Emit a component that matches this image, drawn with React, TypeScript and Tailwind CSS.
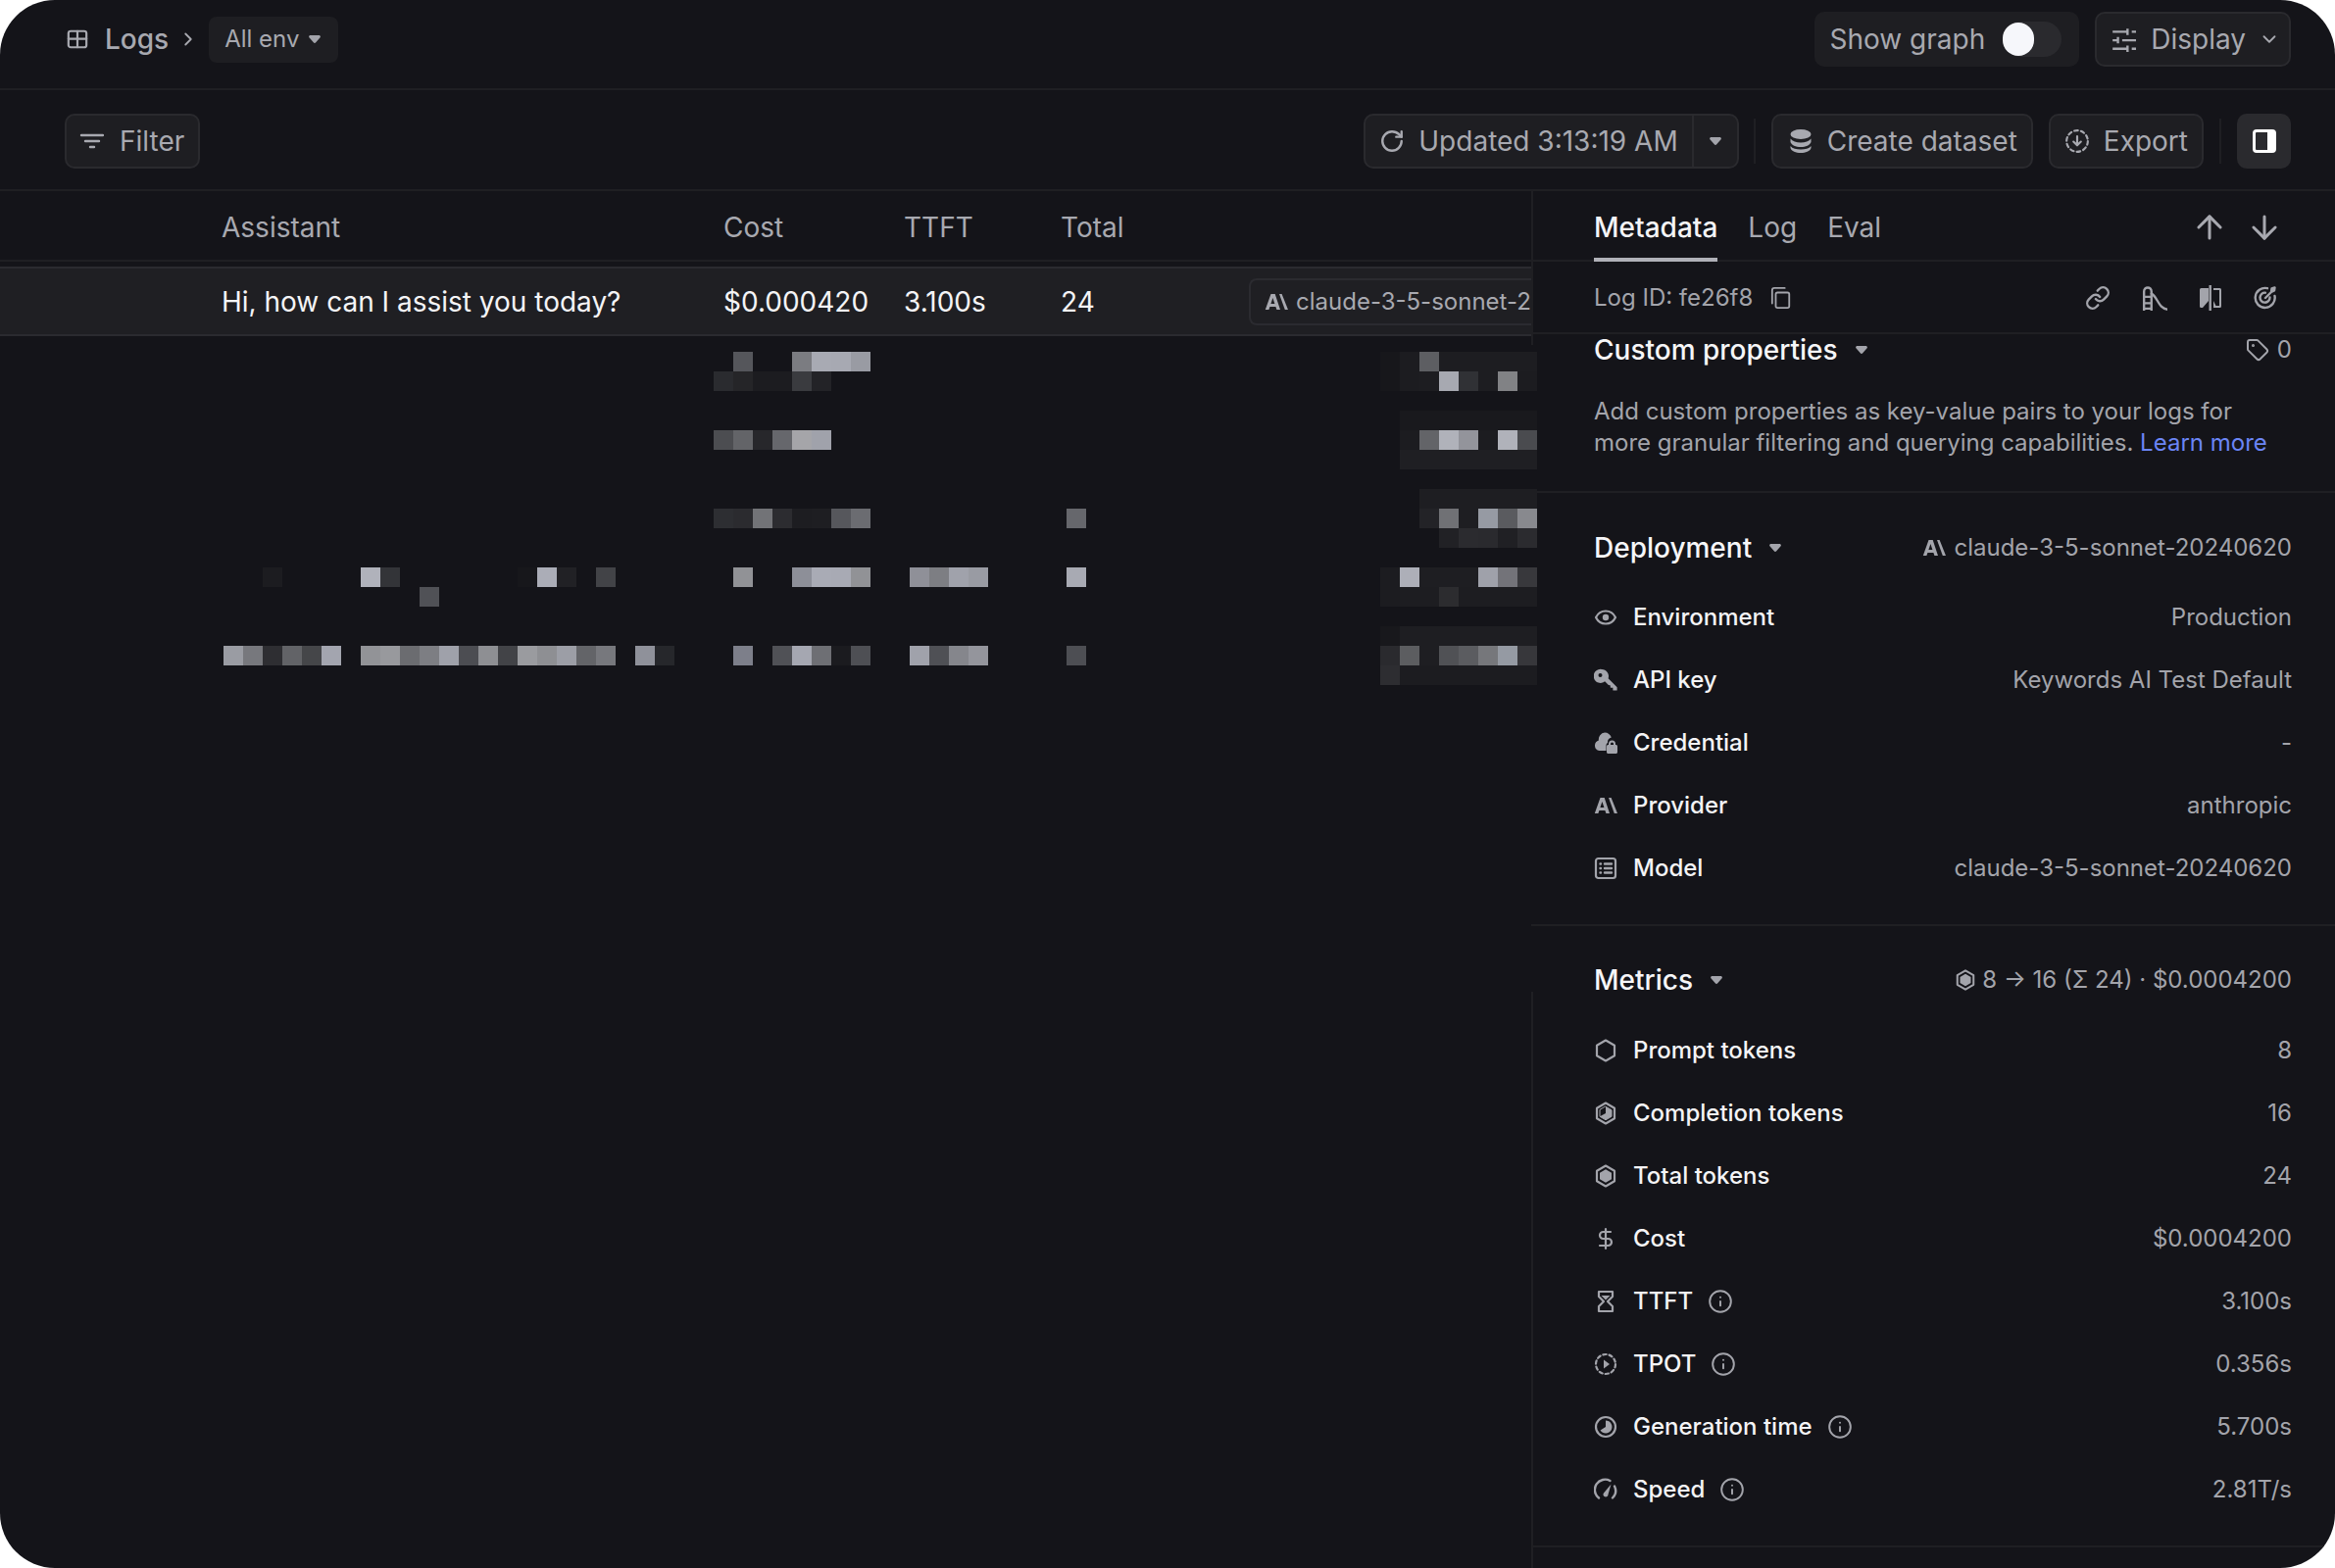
import * as React from "react"
import { ArrowDown, ArrowUp, ChevronDown, ChevronRight, DollarSign, Info, Link, RotateCw, Tag } from "lucide-react"

const Svg = ({ children, w = 24, h = 24, vb = "0 0 24 24", sw = 2.2 }: { children: React.ReactNode; w?: number; h?: number; vb?: string; sw?: number }) => (
    <svg width={w} height={h} viewBox={vb} fill="none" stroke="currentColor" strokeWidth={sw} strokeLinecap="round" strokeLinejoin="round" className="shrink-0">
        {children}
    </svg>
)

const Caret = () => (
    <svg width="12" height="8" viewBox="0 0 12 8" className="shrink-0 text-[#a3a4ab]" fill="currentColor">
        <path d="M1.6 0h8.8c1.2 0 1.9 1.3 1.2 2.3L7.2 7.3c-.6.8-1.8.8-2.4 0L.4 2.3C-.3 1.3.4 0 1.6 0z" />
    </svg>
)

const AnthropicLogo = ({ w = 24 }: { w?: number }) => (
    <svg width={w} height="18" viewBox="0 0 24 18" className="shrink-0" fill="currentColor" fillRule="evenodd">
        <path d="M6.5 1h4.2L16 17h-3.600l-1-3H5.400l-1 3H.8zM6.400 11h4L8.400 5z" />
        <path d="M15 1h2.600L24 17h-3.200z" />
    </svg>
)

const TableIcon = () => (
    <Svg w={24} h={22} sw={2.4}>
        <rect x="2" y="3" width="20" height="18" rx="2.5" />
        <path d="M2 11.5h20M12 3v18" />
    </Svg>
)

const FilterIcon = () => (
    <Svg w={26} h={24} sw={2.4}>
        <path d="M2 6h22M6 12h14M11 18h4" />
    </Svg>
)

const SlidersIcon = () => (
    <Svg w={26} h={26} sw={2.2}>
        <path d="M2 5h13M20 5h4M2 13h4M11 13h13M2 21h13M20 21h4M16 2v6M7 10v6M16 18v6" strokeLinecap="butt" />
    </Svg>
)

const DatabaseIcon = () => (
    <svg width="24" height="26" viewBox="0 0 24 26" className="shrink-0" fill="currentColor">
        <ellipse cx="12" cy="6" rx="10.5" ry="5" />
        <path d="M1.5 10.5c2 2.7 6 4 10.5 4s8.500-1.300 10.500-4v3.500c-1 3-5.500 5-10.500 5S2.500 17 1.500 14z" />
        <path d="M1.500 18c2 2.700 6 3.500 10.500 3.500s8.500-.8 10.500-3.500v2c-1 3.200-5.500 5-10.500 5s-9.500-1.800-10.500-5z" />
    </svg>
)

const ExportIcon = () => (
    <Svg w={26} h={26} sw={2}>
        <circle cx="12" cy="12" r="10" strokeDasharray="3.4 2.9" />
        <path d="M12 7.500v8M8.500 12.500 12 16l3.500-3.500" />
    </Svg>
)

const PanelIcon = () => (
    <svg width="24" height="24" viewBox="0 0 24 24" className="shrink-0">
        <rect x="1.500" y="1.500" width="21" height="21" rx="2.500" fill="none" stroke="#fff" strokeWidth="3" />
        <rect x="15" y="2" width="7" height="20" fill="#fff" />
    </svg>
)

const CopyIcon = () => (
    <Svg w={22} h={24} sw={2}>
        <rect x="6" y="6" width="15" height="17" rx="2" />
        <path d="M2 18V3.500C2 2.100 3 1 4.500 1H16" />
    </Svg>
)

const SlideIcon = () => (
    <Svg w={26} h={26} sw={2.2}>
        <path d="M2 24V6c0-5 7-5 7 0v18M2 11h7M2 17h7M2 22h7" strokeLinecap="butt" />
        <path d="M9 8c6 3 6 14 16 15" />
    </Svg>
)

const SplitIcon = () => (
    <svg width="24" height="26" viewBox="0 0 24 26" className="shrink-0" fill="currentColor">
        <path d="M10 3H2.500A1.500 1.500 0 0 0 1 4.500v17A1.500 1.500 0 0 0 2.500 23H4l6-7z" />
        <rect x="10.500" y="0" width="2.400" height="26" />
        <path d="M15 3h6.500A1.500 1.500 0 0 1 23 4.500v17a1.500 1.500 0 0 1-1.500 1.500H15v-2h6V5h-6z" />
        <path d="M15 23v-7l3.500 7z" />
    </svg>
)

const TargetIcon = () => (
    <Svg w={24} h={24} sw={2.4}>
        <path d="M21.500 10a10 10 0 1 1-7.500-7.800" />
        <path d="M16.500 11.500a5 5 0 1 1-4.500-4.800" />
        <path d="M12 12l6-6M18 6l.5-3.500 3-1-.5 3-3 1.500z" fill="currentColor" />
    </Svg>
)

const EyeIcon = () => (
    <Svg w={24} h={24}>
        <path d="M2 12c2-4 5.500-6.500 10-6.500S20 8 22 12c-2 4-5.500 6.500-10 6.500S4 16 2 12z" />
        <circle cx="12" cy="12" r="3.200" fill="currentColor" stroke="none" />
    </Svg>
)

const KeyIcon = () => (
    <svg width="24" height="24" viewBox="0 0 24 24" className="shrink-0" fill="currentColor" fillRule="evenodd">
        <path d="M8 1a7 7 0 0 1 6.600 9.300l9 9v3.200h-4.200v-2.700h-2.500l-.3-2.500-1.700-.3-3.800-3.700A7 7 0 1 1 8 1zM6.500 5a2 2 0 1 0 0 4 2 2 0 0 0 0-4z" />
    </svg>
)

const CloudLockIcon = () => (
    <svg width="24" height="24" viewBox="0 0 24 24" className="shrink-0" fill="currentColor">
        <path d="M11 1.500c3.200 0 5.900 2.100 6.800 5a5 5 0 0 0-3.800 4.900v.6a2.800 2.800 0 0 0-1.500 2.500V20H5.500A5 5 0 0 1 1 14.600c0-2.500 1.700-4.500 3.900-5.100A7 7 0 0 1 11 1.500z" />
        <path fillRule="evenodd" d="M18.500 9.500a3.500 3.500 0 0 1 3.500 3.500v1h.5c.8 0 1.500.7 1.500 1.500v6c0 .8-.7 1.500-1.500 1.500h-8c-.8 0-1.500-.7-1.500-1.500v-6c0-.8.700-1.500 1.500-1.500h.5v-1a3.500 3.500 0 0 1 3.500-3.500zm0 2a1.500 1.500 0 0 0-1.500 1.500v1h3v-1a1.500 1.500 0 0 0-1.500-1.500z" />
    </svg>
)

const ListIcon = () => (
    <Svg w={24} h={24}>
        <rect x="2" y="2" width="20" height="20" rx="2.500" />
        <path d="M11 7.500h7M11 12h7M11 16.500h7M6.500 7.500h.5M6.500 12h.5M6.500 16.500h.5" strokeWidth="2.400" />
    </Svg>
)

const hex = "M12 1.500 21 6.700v10.600L12 22.500 3 17.300V6.700z"
const hexInner = "M12 5.200 18 8.700v6.600L12 18.800 6 15.300V8.700z"

const HexIcon = () => (
    <Svg>
        <path d={hex} />
    </Svg>
)

const HexHalfIcon = () => (
    <Svg>
        <path d={hex} />
        <path d={hexInner} strokeWidth="1" />
        <path d="M12 5.200 18 8.700v6.600L12 18.800 6 15.300 12 12z" fill="currentColor" stroke="none" />
    </Svg>
)

const HexFullIcon = ({ w = 24 }: { w?: number }) => (
    <Svg w={w} h={w}>
        <path d={hex} />
        <path d={hexInner} fill="currentColor" stroke="none" />
    </Svg>
)

const HourglassIcon = () => (
    <Svg>
        <path d="M5 2h14v5l-5 5 5 5v5H5v-5l5-5-5-5z" />
        <path d="M7.500 6h9L12 10.500z" fill="currentColor" stroke="none" />
    </Svg>
)

const DashPlayIcon = () => (
    <Svg>
        <circle cx="12" cy="12" r="10" strokeDasharray="3.400 2.900" />
        <path d="M10 7.500v9l6-4.500z" fill="currentColor" stroke="none" />
    </Svg>
)

const PieIcon = () => (
    <Svg>
        <circle cx="12" cy="12" r="10" />
        <path d="M12 5.500a6.500 6.500 0 1 1-5.500 10l5.500-3.500z" fill="currentColor" stroke="none" />
    </Svg>
)

const GaugeIcon = () => (
    <Svg sw={2.4}>
        <path d="M5 20.500A10.500 10.500 0 0 1 16.500 3M21 8.500a10.500 10.500 0 0 1-2 12" />
        <path d="M10 15.500 17.500 6.500 14.500 17a2.500 2.500 0 1 1-4.500-1.500z" fill="currentColor" stroke="none" />
    </Svg>
)

const Btn = ({ className = "", children }: { className?: string; children: React.ReactNode }) => (
    <div className={`flex h-[56px] items-center rounded-[10px] border-2 border-[#2a2a2e] bg-[#1e1e22] text-[28px] text-[#a8a9b0] ${className}`}>
        {children}
    </div>
)

const Row = ({ icon, label, value, info }: { icon: React.ReactNode; label: string; value: string; info?: boolean }) => (
    <div className="flex h-[64px] items-center justify-between text-[24px]">
        <div className="flex items-center">
            <span className="mr-4 flex w-6 justify-center text-[#a3a4ab]">{icon}</span>
            <span className="font-medium text-[#f4f4f6]">{label}</span>
            {info && <Info size={26} strokeWidth={1.8} className="ml-[15px] text-[#a3a4ab]" />}
        </div>
        <span className="text-[#a3a4ab]">{value}</span>
    </div>
)

const SectionTitle = ({ title }: { title: string }) => (
    <div className="flex items-center gap-[18px] text-[28px] font-medium text-[#f6f6f8]">
        <span>{title}</span>
        <Caret />
    </div>
)

// redacted cells: x, y, then one colour per 20px cell
const mosaic: [number, number, string[]][] = [
    [728, 19, ["", "#55565b", "", "", "#7b7c81", "#a8aab3", "#a7a9b2", "#999ba3"]],
    [728, 39, ["#2a2b2f", "#252528", "#1c1c20", "#1c1c20", "#3a3b3f", "#232327"]],
    [728, 99, ["#4c4d51", "#636468", "#27272b", "#66676c", "#a5a5a9", "#a0a2ab"]],
    [728, 179, ["#2d2e32", "#2b2b2f", "#727377", "#2c2c30", "#1d1d21", "#1e1e22", "#56575c", "#6b6c71"]],
    [728, 239, ["", "#919296", "", "", "#8d8f98", "#a9abb5", "#a8aab4", "#919296"]],
    [728, 319, ["", "#7d7f8a", "", "#505156", "#a5a7b1", "#6e6f74", "#1b1b1f", "#4e4f54"]],
    [928, 239, ["#8f9098", "#7d7e83", "#a0a2ab", "#999ba3"]],
    [928, 319, ["#a0a2ab", "#4f5055", "#85868c", "#94959c"]],
    [1088, 179, ["#66676c"]],
    [1088, 239, ["#a8aab3"]],
    [1088, 319, ["#4d4e53"]],
    [228, 239, ["", "", "#1c1c20", "", "", "", "", "#b0b2bb", "#333438", "", "", "", "", "", "", "#17171b", "#abadb7", "#212125", "", "#424347"]],
    [428, 259, ["#505156"]],
    [228, 319, ["#9a9ca3", "#77787d", "#2e2e32", "#626367", "#454649", "#a3a5af", "", "#929397", "#98999d", "#6b6c70", "#7d7e83", "#9fa1aa", "#4c4d52", "#8e8f93", "#424347", "#9a9b9f", "#8e8f93", "#9c9ea6", "#636468", "#77787d", "", "#8f919a", "#26272b"]],
    [1408, 19, ["#17171b", "#1c1c20", "#5d5e62", "#1d1d21", "#1d1d21", "#1d1d21", "#1d1d21", "#1d1d21"]],
    [1408, 39, ["#17171b", "#1c1c20", "#1d1d21", "#a7a9b1", "#303135", "#1d1d21", "#818285", "#1c1c20"]],
    [1428, 79, ["#19191d", "#19191d", "#19191d", "#19191d", "#19191d", "#19191d", "#19191d"]],
    [1428, 99, ["#1c1c20", "#636468", "#b0b2ba", "#93949b", "#1c1c20", "#b0b2ba", "#4a4b4f"]],
    [1428, 119, ["#1f1f23", "#1f1f23", "#1f1f23", "#1f1f23", "#1f1f23", "#1f1f23", "#1f1f23"]],
    [1448, 159, ["#1e1e22", "#1e1e22", "#1e1e22", "#1e1e22", "#1e1e22", "#1e1e22"]],
    [1448, 179, ["#232327", "#707175", "#1e1e22", "#969aa3", "#5a5b5f", "#88898e"]],
    [1468, 199, ["#212125", "#2b2b2f", "#2a2a2e", "#202024", "#2b2b2f"]],
    [1408, 239, ["#1c1c20", "#adafb8", "#1e1e22", "#1e1e22", "#1e1e22", "#9fa1aa", "#737379", "#38383c"]],
    [1408, 259, ["#1c1c20", "#1d1d21", "#1d1d21", "#2c2c2f", "#1d1d21", "#1d1d21", "#1d1d21", "#1d1d21"]],
    [1408, 299, ["#18181c", "#1e1e22", "#1e1e22", "#1e1e22", "#1e1e22", "#1e1e22", "#1e1e22", "#1e1e22"]],
    [1408, 319, ["#2a2a2e", "#5c5d60", "#1e1e22", "#505155", "#5b5c60", "#76777b", "#959aa3", "#37373b"]],
    [1408, 339, ["#2d2d31", "#1c1c20", "#1c1c20", "#1c1c20", "#1c1c20", "#1c1c20", "#1c1c20", "#1c1c20"]],
]

const Mosaic = () => (
    <svg width="1600" height="380" viewBox="0 0 1600 380" shapeRendering="crispEdges" className="absolute left-0 top-[340px]">
        {mosaic.map(([x, y, cells]) =>
            cells.map((fill, i) => fill && <rect key={`${x}-${y}-${i}`} x={x + i * 20} y={y} width="20" height="20" fill={fill} />)
        )}
    </svg>
)

export default function App() {
    return (
        <div className="h-[1600px] w-[2382px] overflow-hidden bg-white" style={{ fontFamily: "Inter, sans-serif" }}>
            <div className="relative flex h-full flex-col overflow-hidden rounded-[56px] bg-[#141419]">
                {/* Top bar */}
                <div className="flex h-[92px] shrink-0 items-center justify-between border-b-2 border-[#1f1f23] pb-[10px] pl-[67px] pr-[45px]">
                    <div className="flex items-center text-[#a8a9b0]">
                        <TableIcon />
                        <span className="ml-[16px] text-[28px] font-medium">Logs</span>
                        <ChevronRight size={22} strokeWidth={2} className="ml-[9px] mr-[10px]" />
                        <div className="flex h-[47px] items-center gap-[10px] rounded-[8px] bg-[#1e1e22] pl-4 pr-[18px] text-[24px]">
                            All env
                            <Caret />
                        </div>
                    </div>
                    <div className="flex items-center gap-4">
                        <div className="flex h-[56px] items-center gap-[18px] rounded-[10px] bg-[#1e1e22] pl-4 pr-[18px] text-[28px] text-[#a8a9b0]">
                            Show graph
                            <div className="flex h-[36px] w-[60px] items-center rounded-full bg-[#2a2a2e]">
                                <div className="h-[34px] w-[32px] rounded-full bg-[#f6f7fb]" />
                            </div>
                        </div>
                        <Btn className="gap-[15px] pl-[14px] pr-[9px]">
                            <SlidersIcon />
                            Display
                            <ChevronDown size={22} strokeWidth={2} className="-ml-[2px]" />
                        </Btn>
                    </div>
                </div>

                {/* Toolbar */}
                <div className="flex h-[103px] shrink-0 items-center justify-between border-b-2 border-[#1f1f23] pl-[66px] pr-[45px] pt-[2px]">
                    <Btn className="gap-4 pl-3 pr-[14px]">
                        <FilterIcon />
                        Filter
                    </Btn>
                    <div className="flex items-center">
                        <Btn className="pl-[14px]">
                            <RotateCw size={26} strokeWidth={2.2} />
                            <span className="ml-[14px] mr-[14px]">Updated 3:13:19 AM</span>
                            <div className="flex h-full w-[46px] items-center justify-center border-l-2 border-[#2a2a2e]">
                                <Caret />
                            </div>
                        </Btn>
                        <div className="ml-[15px] mr-4 h-[46px] w-0.5 bg-[#1f1f23]" />
                        <Btn className="gap-[15px] pl-4 pr-[14px]">
                            <DatabaseIcon />
                            Create dataset
                        </Btn>
                        <Btn className="ml-4 gap-[14px] pl-[14px] pr-[14px]">
                            <ExportIcon />
                            Export
                        </Btn>
                        <div className="mx-4 h-[46px] w-0.5 bg-[#1f1f23]" />
                        <div className="flex h-[56px] w-[55px] items-center justify-center rounded-[10px] bg-[#2a2a2e]">
                            <PanelIcon />
                        </div>
                    </div>
                </div>

                <div className="flex min-h-0 flex-1">
                    {/* Table */}
                    <div className="w-[1562px] shrink-0 overflow-hidden">
                        <div className="grid h-[72px] grid-cols-[512px_184px_160px_1fr] items-center border-b-2 border-[#1f1f23] pl-[226px] pt-[3px] text-[28px] text-[#a8a9b0]">
                            <span>Assistant</span>
                            <span>Cost</span>
                            <span>TTFT</span>
                            <span>Total</span>
                        </div>
                        <div className="mt-[5px] grid h-[71px] grid-cols-[512px_184px_160px_192px_288px] items-center border-y-2 border-[#2b2b30] bg-[#1f1f23] pl-[226px] text-[28px] text-[#f4f4f6]">
                            <span>Hi, how can I assist you today?</span>
                            <span>$0.000420</span>
                            <span>3.100s</span>
                            <span>24</span>
                            <div className="flex h-[48px] items-center gap-[8px] overflow-hidden rounded-l-[8px] border-y-2 border-l-2 border-[#2b2b30] pl-[14px] text-[24px] whitespace-nowrap text-[#a8a9b0]">
                                <AnthropicLogo />
                                claude-3-5-sonnet-20240620
                            </div>
                        </div>
                    </div>

                    {/* Detail panel */}
                    <div className="relative min-w-0 flex-1">
                        <div className="relative border-l-2 border-[#1f1f23]">
                            <div className="flex h-[72px] items-center justify-between border-b-2 border-[#1f1f23] pl-[62px] pr-[53px] text-[28px] text-[#a8a9b0]">
                                <div className="flex h-full items-center gap-[31px]">
                                    <span className="relative flex h-full items-center pt-[3px] font-medium text-[#f4f4f6]">
                                        Metadata
                                        <span className="absolute inset-x-0 bottom-[-2px] h-1 bg-[#b0b1b8]" />
                                    </span>
                                    <span className="pt-[3px]">Log</span>
                                    <span className="pt-[3px]">Eval</span>
                                </div>
                                <div className="flex items-center gap-[18px] pt-[3px] text-[#a8a9b0]">
                                    <ArrowUp size={38} strokeWidth={1.9} />
                                    <ArrowDown size={38} strokeWidth={1.9} />
                                </div>
                            </div>
                            <div className="flex h-[74px] items-center justify-between border-b-2 border-[#1f1f23] pl-[62px] pr-[59px] pt-[2px] text-[24px] text-[#a3a4ab]">
                                <div className="flex items-center gap-[18px]">
                                    Log ID: fe26f8
                                    <CopyIcon />
                                </div>
                                <div className="flex items-center gap-[32px]">
                                    <Link size={26} strokeWidth={2.2} className="ml-[2px]" />
                                    <SlideIcon />
                                    <SplitIcon />
                                    <TargetIcon />
                                </div>
                            </div>
                            <div className="absolute left-[-2px] top-full h-[11px] w-0.5 bg-[#1f1f23]" />
                        </div>

                        <div className="h-[162px] border-b-2 border-[#1f1f23] pl-[64px] pr-[44px]">
                            <div className="flex h-[32px] items-center justify-between">
                                <SectionTitle title="Custom properties" />
                                <div className="flex items-center gap-2 text-[24px] text-[#a3a4ab]">
                                    <Tag size={24} strokeWidth={2} />
                                    0
                                </div>
                            </div>
                            <p className="mt-[31px] text-[24px] leading-[32px] text-[#a3a4ab]">
                                Add custom properties as key-value pairs to your logs for
                                <br />
                                more granular filtering and querying capabilities. <span className="text-[#6b85f5]">Learn more</span>
                            </p>
                        </div>

                        <div className="h-[442px] border-b-2 border-[#1f1f23] pl-[64px] pr-[44px] pt-[36px]">
                            <div className="flex h-[40px] items-center justify-between">
                                <SectionTitle title="Deployment" />
                                <div className="flex items-center gap-2 text-[24px] text-[#a3a4ab]">
                                    <AnthropicLogo />
                                    claude-3-5-sonnet-20240620
                                </div>
                            </div>
                            <div className="mt-[19px]">
                                <Row icon={<EyeIcon />} label="Environment" value="Production" />
                                <Row icon={<KeyIcon />} label="API key" value="Keywords AI Test Default" />
                                <Row icon={<CloudLockIcon />} label="Credential" value="-" />
                                <Row icon={<AnthropicLogo />} label="Provider" value="anthropic" />
                                <Row icon={<ListIcon />} label="Model" value="claude-3-5-sonnet-20240620" />
                            </div>
                        </div>

                        <div className="pt-[39px]">
                            <div className="flex h-[32px] items-center justify-between pl-[64px] pr-[44px]">
                                <SectionTitle title="Metrics" />
                                <div className="flex items-center gap-[6px] text-[24px] text-[#a3a4ab]">
                                    <HexFullIcon w={22} />
                                    8 → 16 (Σ 24) · $0.0004200
                                </div>
                            </div>
                            <div className="-mt-1 border-l-2 border-[#1f1f23]">
                                <div className="border-b-2 border-[#1f1f23] pb-[25px] pl-[62px] pr-[44px] pt-[28px]">
                                    <Row icon={<HexIcon />} label="Prompt tokens" value="8" />
                                    <Row icon={<HexHalfIcon />} label="Completion tokens" value="16" />
                                    <Row icon={<HexFullIcon />} label="Total tokens" value="24" />
                                    <Row icon={<DollarSign size={28} strokeWidth={2.2} />} label="Cost" value="$0.0004200" />
                                    <Row icon={<HourglassIcon />} label="TTFT" value="3.100s" info />
                                    <Row icon={<DashPlayIcon />} label="TPOT" value="0.356s" info />
                                    <Row icon={<PieIcon />} label="Generation time" value="5.700s" info />
                                    <Row icon={<GaugeIcon />} label="Speed" value="2.81T/s" info />
                                </div>
                                <div className="h-[40px]" />
                            </div>
                        </div>
                    </div>
                </div>

                <Mosaic />
            </div>
        </div>
    )
}
